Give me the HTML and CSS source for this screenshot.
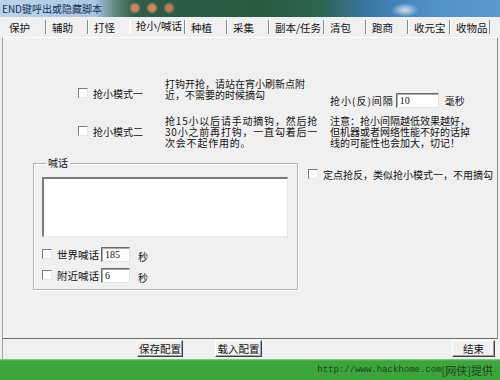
FILE: index.html
```html
<!DOCTYPE html>
<html lang="zh-CN">
<head>
    <meta charset="UTF-8">
    <meta name="viewport" content="width=device-width, initial-scale=1.0">
    <title>END键呼出或隐藏脚本</title>
    <link rel="stylesheet" href="styles.css">
</head>
<body>
    <div class="window">
        <div class="titlebar"><span class="title">END键呼出或隐藏脚本</span></div>
        <div class="tabs">
            <span class="tab">保护</span>
            <span class="tab">辅助</span>
            <span class="tab">打怪</span>
            <span class="tab wide active">抢小/喊话</span>
            <span class="tab">种植</span>
            <span class="tab">采集</span>
            <span class="tab wide">副本/任务</span>
            <span class="tab">清包</span>
            <span class="tab">跑商</span>
            <span class="tab">收元宝</span>
            <span class="tab last">收物品</span>
        </div>
        <div class="panel">
            <div class="modes">
                <label class="check mode-one"><span class="box"></span>抢小模式一</label>
                <p class="desc desc-one">打钩开抢，请站在宵小刷新点附<br>近，不需要的时候摘勾</p>
                <div class="interval">
                    <span class="interval-label">抢小(反)间隔</span>
                    <span class="field interval-field">10</span>
                    <span class="unit">毫秒</span>
                </div>
                <label class="check mode-two"><span class="box"></span>抢小模式二</label>
                <p class="desc desc-two">抢15小以后请手动摘钩，然后抢<br>30小之前再打钩，一直勾着后一<br>次会不起作用的。</p>
                <p class="desc note">注意：抢小间隔越低效果越好，<br>但机器或者网络性能不好的话掉<br>线的可能性也会加大，切记！</p>
            </div>
            <div class="lower">
                <fieldset class="group">
                    <legend>喊话</legend>
                    <div class="memo"></div>
                    <div class="shout-row">
                        <label class="check shout-label"><span class="box"></span>世界喊话</label>
                        <span class="field shout-field">185</span>
                        <span class="unit">秒</span>
                    </div>
                    <div class="shout-row">
                        <label class="check shout-label"><span class="box"></span>附近喊话</label>
                        <span class="field shout-field">6</span>
                        <span class="unit">秒</span>
                    </div>
                </fieldset>
                <label class="check fixed-point"><span class="box"></span>定点抢反，类似抢小模式一，不用摘勾</label>
            </div>
        </div>
        <div class="buttons">
            <button class="btn save">保存配置</button>
            <button class="btn load">载入配置</button>
            <button class="btn quit">结束</button>
        </div>
        <div class="status"><span class="url">http://www.hackhome.com</span><span>[网侠]提供</span></div>
    </div>
</body>
</html>
```

FILE: styles.css
```css
body {
    margin: 0;
    background: #f0f0f0;
    font-family: "Noto Sans CJK SC", "Noto Sans", sans-serif;
    font-size: 10px;
    color: #111;
}
.window {
    width: 500px;
    height: 380px;
    display: flex;
    flex-direction: column;
    overflow: hidden;
}
.titlebar {
    height: 17px;
    flex: none;
    display: flex;
    align-items: center;
    padding-left: 2px;
    background:
        radial-gradient(circle at 135px 8px, #c88a5a 0 3px, transparent 6px),
        radial-gradient(circle at 152px 8px, #c88a5a 0 3px, transparent 6px),
        radial-gradient(circle at 169px 8px, #b88050 0 3px, transparent 6px),
        radial-gradient(ellipse 14px 7px at 405px 10px, #cfe4f3, transparent),
        linear-gradient(90deg, #bcd4ea 0, #a9c7e2 95px, #5f8a7e 115px, #2e5c48 135px, #2a5a3e 260px, #2d6450 320px, #3a78a8 370px, #4f90c8 430px, #5a9ad0 500px);
}
.title {
    font-size: 10px;
    color: #18305a;
}
.tabs {
    height: 20px;
    flex: none;
    display: flex;
    padding-left: 3px;
}
.tab {
    width: 42px;
    box-sizing: border-box;
    margin: 3px 0;
    padding-left: 6px;
    display: flex;
    align-items: center;
    font-size: 10.5px;
    border-left: 1px solid #8a8a8a;
    box-shadow: inset 1px 0 #fff;
}
.tab:first-child {
    border-left: 0;
    box-shadow: none;
}
.tab.wide {
    width: 55px;
}
.tab.active {
    border-left-color: #fff;
    padding-bottom: 3px;
}
.tab.last {
    width: 41px;
    border-right: 1px solid #8a8a8a;
}
.panel {
    height: 302px;
    flex: none;
    box-sizing: border-box;
    margin: 0 2px;
    border-top: 1px solid #fff;
    border-left: 1px solid #a0a0a0;
    border-right: 1px solid #8a8a8a;
    border-bottom: 1px solid #6e6e6e;
}
.modes {
    display: grid;
    grid-template-columns: 87px 165px 1fr;
    grid-template-rows: 37px 33px;
    padding: 40px 0 0 75px;
}
.check {
    display: flex;
    align-items: center;
    gap: 5px;
    height: 12px;
    white-space: nowrap;
}
.box {
    width: 8px;
    height: 8px;
    background: #fff;
    border-top: 1px solid #7a7a7a;
    border-left: 1px solid #7a7a7a;
    border-right: 1px solid #e8e8e8;
    border-bottom: 1px solid #e8e8e8;
}
.mode-one {
    margin-top: 9px;
}
.mode-two {
    margin-top: 10px;
}
.desc {
    margin: 0;
    line-height: 11px;
    white-space: nowrap;
}
.desc-two {
    letter-spacing: 0.8px;
}
.interval {
    display: flex;
    align-items: center;
    margin-top: 15px;
    height: 15px;
}
.interval-label {
    letter-spacing: 1px;
}
.field {
    box-sizing: border-box;
    height: 15px;
    background: #fff;
    border-top: 1px solid #6a6a6a;
    border-left: 1px solid #6a6a6a;
    border-right: 1px solid #e3e3e3;
    border-bottom: 1px solid #e3e3e3;
    box-shadow: inset 1px 1px #a8a8a8;
    padding-left: 3px;
    font: 10px "Liberation Serif", serif;
    line-height: 13px;
}
.interval-field {
    width: 43px;
    margin-left: 2px;
}
.interval .unit {
    margin-left: 6px;
}
.lower {
    display: flex;
    align-items: flex-start;
    padding-left: 30px;
    margin-top: 9px;
}
.group {
    width: 265px;
    box-sizing: border-box;
    margin: 0;
    padding: 8px 8px 6px;
    border: 1px solid #b4b4b4;
    box-shadow: inset 1px 1px #fff, 1px 1px #fff;
}
.group legend {
    margin-left: 4px;
    padding: 0 2px;
    line-height: 12px;
}
.memo {
    width: 246px;
    height: 60px;
    box-sizing: border-box;
    background: #fff;
    border-top: 2px solid #7a7a7a;
    border-left: 2px solid #7a7a7a;
    border-right: 1px solid #e8e8e8;
    border-bottom: 1px solid #e8e8e8;
}
.shout-row {
    display: flex;
    align-items: center;
    height: 16px;
    margin-top: 9px;
}
.shout-row + .shout-row {
    margin-top: 5px;
}
.shout-label {
    width: 59px;
    font-size: 10.5px;
}
.shout-field {
    width: 29px;
}
.shout-row .unit {
    margin-left: 8px;
    padding-top: 4px;
}
.fixed-point {
    margin: 11px 0 0 10px;
}
.buttons {
    height: 20px;
    flex: none;
    box-sizing: border-box;
    margin-left: 2px;
    border-left: 1px solid #a0a0a0;
    display: flex;
    align-items: flex-start;
    padding: 1px 5px 0 134px;
}
.btn {
    height: 17px;
    padding: 0;
    font-family: "Noto Sans CJK SC", sans-serif;
    font-size: 10.5px;
    color: #111;
    background: #f0f0f0;
    border-top: 1px solid #fff;
    border-left: 1px solid #fff;
    border-right: 1px solid #404040;
    border-bottom: 1px solid #404040;
    box-shadow: inset -1px -1px #a0a0a0;
}
.save {
    width: 46px;
}
.load {
    width: 47px;
    margin-left: 32px;
}
.quit {
    width: 43px;
    margin-left: auto;
}
.status {
    height: 21px;
    flex: none;
    display: flex;
    align-items: center;
    justify-content: flex-end;
    padding-right: 7px;
    background: linear-gradient(#8fcf8f 0, #3ca63c 2px, #3aa43a);
    color: #1a421a;
    font-size: 11px;
}
.url {
    font: 9px "Liberation Mono", monospace;
}
```
